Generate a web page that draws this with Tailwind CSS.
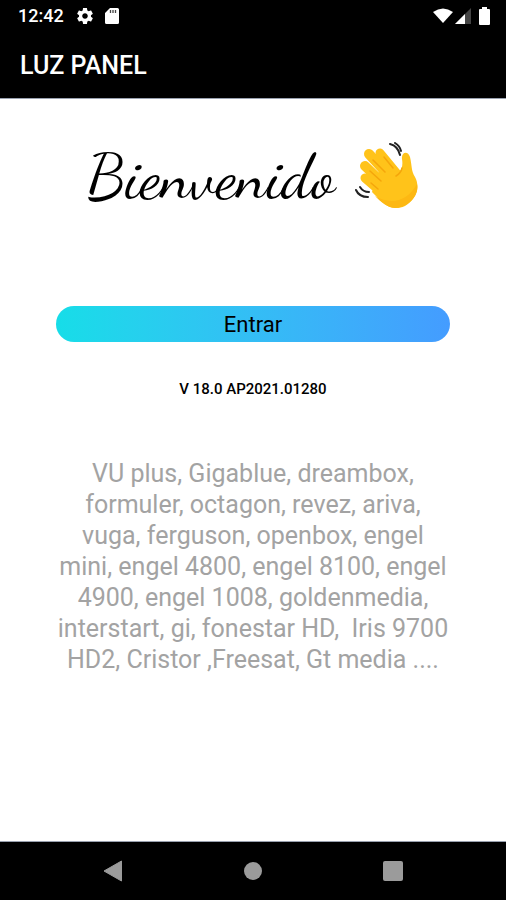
<!DOCTYPE html>
<html lang="es">
<head>
  <meta charset="UTF-8" />
  <meta name="viewport" content="width=device-width, initial-scale=1.0" />
  <title>LUZ PANEL</title>
  <script src="https://cdn.jsdelivr.net/npm/@tailwindcss/browser@4"></script>
</head>
<body class="min-h-screen flex flex-col bg-white text-black font-[Roboto,sans-serif]">
  <header class="bg-black text-white border-b border-gray-400">
    <!-- status bar -->
    <div class="flex items-center justify-between h-8 pl-[18px] pr-4">
      <div class="flex items-center">
        <span class="text-[18px] font-medium leading-8">12:42</span>
        <svg class="w-4 h-4 ml-[13px]" viewBox="2 2 20 20" fill="currentColor">
          <path d="M19.43 12.98c.04-.32.07-.64.07-.98s-.03-.66-.07-.98l2.11-1.65c.19-.15.24-.42.12-.64l-2-3.46c-.12-.22-.39-.3-.61-.22l-2.49 1c-.52-.4-1.08-.73-1.69-.98l-.38-2.65C14.46 2.18 14.25 2 14 2h-4c-.25 0-.46.18-.49.42l-.38 2.65c-.61.25-1.17.59-1.69.98l-2.49-1c-.23-.09-.49 0-.61.22l-2 3.46c-.13.22-.07.49.12.64l2.11 1.65c-.04.32-.07.65-.07.98s.03.66.07.98l-2.11 1.65c-.19.15-.24.42-.12.64l2 3.46c.12.22.39.3.61.22l2.49-1c.52.4 1.08.73 1.69.98l.38 2.65c.03.24.24.42.49.42h4c.25 0 .46-.18.49-.42l.38-2.65c.61-.25 1.17-.59 1.69-.98l2.49 1c.23.09.49 0 .61-.22l2-3.46c.12-.22.07-.49-.12-.64l-2.11-1.65zM12 15.5c-1.93 0-3.5-1.57-3.5-3.5s1.57-3.5 3.5-3.5 3.5 1.57 3.5 3.5-1.57 3.5-3.5 3.5z"/>
        </svg>
        <svg class="w-[14px] h-4 ml-3" viewBox="0 0 14 16">
          <path d="M5 0h7.500A1.500 1.500 0 0 1 14 1.500v13a1.500 1.500 0 0 1-1.500 1.500h-11A1.500 1.500 0 0 1 0 14.500V5z" fill="#fff"/>
          <path d="M5.500 2v3M8 2v3M10.500 2v3" stroke="#444" stroke-width="1.300"/>
        </svg>
      </div>
      <div class="flex items-center">
        <svg class="w-5 h-4" viewBox="0 0 20 16"><path d="M0 4Q10-3 20 4L10 15z" fill="#fff"/></svg>
        <svg class="w-4 h-4 ml-[2px]" viewBox="0 0 16 16">
          <path d="M16 0v16H0z" fill="#444"/>
          <path d="M10 6v10H0z" fill="#fff"/>
        </svg>
        <svg class="w-[11px] h-[18px] ml-2" viewBox="0 0 11 18"><path d="M3 0h5v2h2a1 1 0 0 1 1 1v14a1 1 0 0 1-1 1H1a1 1 0 0 1-1-1V3a1 1 0 0 1 1-1h2z" fill="#fff"/></svg>
      </div>
    </div>
    <h1 class="px-5 pt-1 pb-[2px] text-[25px] font-medium leading-[60px]">LUZ PANEL</h1>
  </header>

  <main class="flex-grow flex flex-col items-center px-14 pt-10 text-center">
    <div class="flex items-center justify-center gap-5">
      <h2 class="text-[63px] leading-[76px] font-['Dancing_Script','Liberation_Serif',cursive]">Bienvenido</h2>
      <svg class="w-16 h-[70px]" viewBox="0 0 64 70" role="img" aria-label="Saludo">
        <g fill="none" stroke="#ffc31a" stroke-linecap="round">
          <path d="M14 12L38 38" stroke-width="10"/>
          <path d="M25 11L44 34" stroke-width="9"/>
          <path d="M10 24L34 47" stroke-width="10"/>
          <path d="M10 36L32 55" stroke-width="9"/>
        </g>
        <path d="M24 29L44 30C47 28 48 23 47 17C46 10 53 8 55 15C57 23 56 29 60 35C66 46 60 58 50 64C41 68 33 66 26 59L17 50z" fill="#ffc31a"/>
        <path d="M62 42C65 55 51 66 40 66C33 66 26 60 20 54C36 63 52 60 62 42z" fill="#fdb813"/>
        <path d="M18 18L30 30M15 29L26 39M16 41L23 47M29 15L38 26M47 26Q46 31 41 34" fill="none" stroke="#f5a60b" stroke-width="1.500" stroke-linecap="round"/>
        <path d="M35 2Q43 4 45 13M40 1Q45 4 46 9M1 48Q4 55 13 55M5 45Q8 50 14 50" fill="none" stroke="#222" stroke-width="2" stroke-linecap="round"/>
      </svg>
    </div>

    <button type="button" class="mt-[91px] w-full h-9 pt-px rounded-full bg-linear-to-r from-[#16dde8] to-[#449cff] text-[22px] leading-9 cursor-pointer">Entrar</button>

    <p class="mt-[37px] text-[15px] leading-5 font-medium">V 18.0 AP2021.01280</p>

    <p class="mt-[59px] pb-8 text-[25px] leading-[31px] text-[#a3a3a3]">VU plus, Gigablue, dreambox, formuler, octagon, revez, ariva, vuga, ferguson, openbox, engel mini, engel 4800, engel 8100, engel 4900, engel 1008, goldenmedia, interstart, gi, fonestar HD,&nbsp; Iris 9700 HD2, Cristor ,Freesat, Gt media ....</p>
  </main>

  <nav class="grid grid-cols-3 h-[59px] px-[43px] bg-black border-t border-gray-400 text-[#9b9b9b]">
    <button type="button" aria-label="Atrás" class="flex items-center justify-center">
      <svg class="w-5 h-[22px]" viewBox="0 0 20 22" fill="currentColor"><path d="M18.500 1v20L1 11z" stroke="currentColor" stroke-linejoin="round"/></svg>
    </button>
    <button type="button" aria-label="Inicio" class="flex items-center justify-center">
      <span class="w-[18px] h-[18px] rounded-full bg-current"></span>
    </button>
    <button type="button" aria-label="Recientes" class="flex items-center justify-center">
      <span class="w-5 h-5 rounded-xs bg-current"></span>
    </button>
  </nav>
</body>
</html>
